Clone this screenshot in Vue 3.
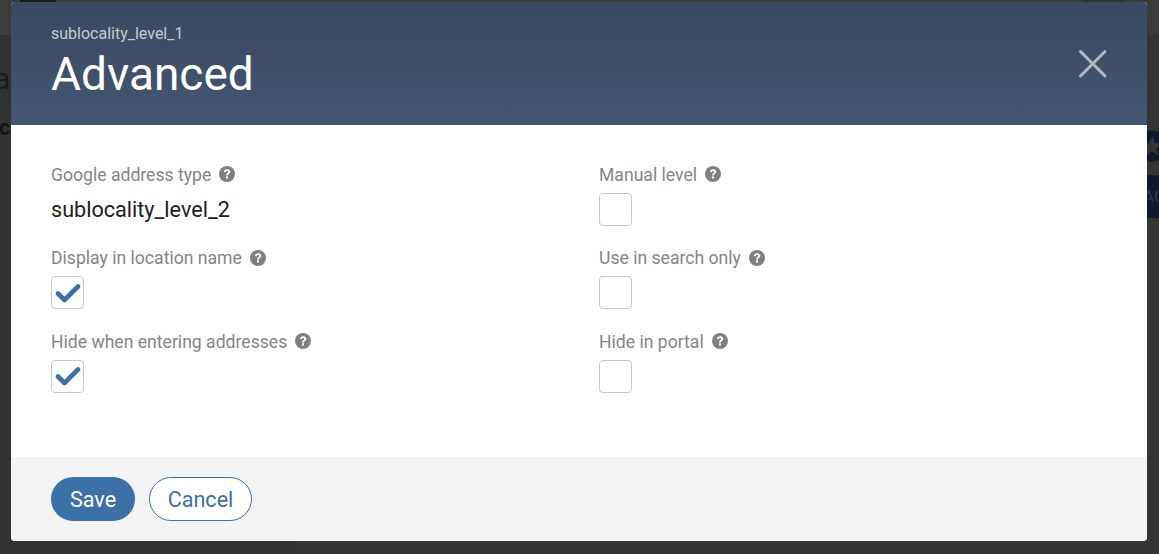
<script setup>
const fields = [
  { label: 'Google address type', value: 'sublocality_level_2' },
  { label: 'Manual level', checked: false },
  { label: 'Display in location name', checked: true },
  { label: 'Use in search only', checked: false },
  { label: 'Hide when entering addresses', checked: true },
  { label: 'Hide in portal', checked: false },
]
</script>

<template>
  <div class="page">
    <div class="behind">
      <div class="strip"></div>
      <div class="side"></div>
      <div class="top-icon"></div>
      <div class="top-btn"></div>
      <span class="peek peek-al">al</span>
      <span class="peek peek-c">c</span>
      <svg class="peek-star" width="30" height="32" viewBox="0 0 30 32">
        <circle cx="16" cy="16" r="15.5" fill="#0e1a2b" />
        <path d="M16 6 L19 13 L26 13.6 L20.6 18.4 L22.4 25.5 L16 21.6 L9.6 25.5 L11.4 18.4 L6 13.6 L13 13 Z" fill="#333" />
      </svg>
      <div class="peek-btn">AC</div>
    </div>
    <div class="modal">
      <header class="head">
        <div>
          <div class="sub">sublocality_level_1</div>
          <h1 class="title">Advanced</h1>
        </div>
        <svg class="close" width="30" height="30" viewBox="0 0 30 30">
          <path d="M2.5 2.5 L27 27 M27 2.5 L2.5 27" stroke="#b3b9c4" stroke-width="3" stroke-linecap="round" fill="none" />
        </svg>
      </header>
      <main class="body">
        <div v-for="f in fields" :key="f.label" class="field">
          <div class="label">
            <span>{{ f.label }}</span>
            <svg class="help" width="16" height="16" viewBox="0 0 16 16">
              <circle cx="8" cy="8" r="8" fill="#808080" />
              <path d="M4.9 6.1 C5 4.2 6.4 3.2 8.2 3.2 C10 3.2 11.3 4.2 11.3 5.8 C11.3 7 10.6 7.5 9.8 8 C9.2 8.4 9 8.7 9 9.5 L7.1 9.5 C7.1 8.3 7.5 7.7 8.2 7.2 C8.9 6.7 9.3 6.5 9.3 6 C9.3 5.4 8.8 5 8.1 5 C7.4 5 6.9 5.5 6.8 6.3 Z" fill="#fff" />
              <rect x="7" y="10.3" width="2" height="2.2" rx=".3" fill="#fff" />
            </svg>
          </div>
          <div v-if="f.value" class="value">{{ f.value }}</div>
          <div v-else class="box">
            <svg v-if="f.checked" width="26" height="22" viewBox="0 0 26 22">
              <path d="M3 11.5 L9.5 18 L23 4.5" stroke="#3b71a6" stroke-width="4.6" stroke-linecap="round" stroke-linejoin="round" fill="none" />
            </svg>
          </div>
        </div>
      </main>
      <footer class="foot">
        <button class="btn save">Save</button>
        <button class="btn cancel">Cancel</button>
      </footer>
    </div>
  </div>
</template>

<style>
html, body { margin: 0; background: #333; }
</style>

<style scoped>
.page {
  position: relative;
  width: 1159px;
  height: 554px;
  overflow: hidden;
  background: #343434;
  padding: 2px 12px 13px 11px;
  box-sizing: border-box;
  font-family: Roboto, sans-serif;
}
.behind { position: absolute; inset: 0; overflow: hidden; }
.strip { position: absolute; left: 0; right: 0; top: 0; height: 35px; background: #3b3b3a; }
.side { position: absolute; left: 0; top: 35px; bottom: 0; width: 295px; background: #323232; }
.top-icon { position: absolute; left: 20px; top: 0; width: 36px; height: 2px; background: #1c1c1c; }
.top-btn { position: absolute; left: 1083px; top: 0; width: 40px; height: 2px; background: #26382f; }
.peek { position: absolute; line-height: 24px; }
.peek-al { left: -6px; top: 64px; font-size: 30px; line-height: 30px; color: #1a1a1a; }
.peek-c { left: -1px; top: 116px; font-size: 22px; font-weight: 700; color: #141414; }
.peek-star { position: absolute; left: 1136px; top: 130px; }
.peek-btn {
  position: absolute;
  left: 1119px;
  top: 175px;
  width: 60px;
  height: 43px;
  background: #0e1a2b;
  color: #2e3844;
  font-size: 17px;
  line-height: 43px;
  padding-left: 24px;
  box-sizing: border-box;
  white-space: nowrap;
}
.modal {
  position: relative;
  height: 539px;
  border-radius: 4px;
  overflow: hidden;
  display: flex;
  flex-direction: column;
  background: #fff;
}
.head {
  height: 123px;
  flex: none;
  box-sizing: border-box;
  padding: 23px 39px 0 40px;
  display: flex;
  justify-content: space-between;
  align-items: flex-start;
  background: linear-gradient(#3a4962, #445672);
}
.sub { font-size: 16px; line-height: 18px; color: #c5cad2; }
.title { margin: 3px 0 0; font-size: 46px; line-height: 56px; font-weight: 400; color: #fff; }
.close { margin-top: 24px; }
.body {
  flex: 1;
  padding: 36.9px 40px 0;
  display: grid;
  grid-template-columns: 548px 1fr;
  grid-auto-rows: 83.5px;
  align-content: start;
}
.label {
  display: flex;
  align-items: center;
  gap: 8px;
  font-size: 17.6px;
  line-height: 25px;
  padding-top: 1px;
  color: #858585;
}
.help { margin-top: -2px; }
.value { margin-top: 9px; font-size: 21.6px; line-height: 26px; color: #212121; }
.box {
  width: 33px;
  height: 33px;
  margin-top: 5px;
  box-sizing: border-box;
  border: 1px solid #c8c8c8;
  border-radius: 4px;
  display: flex;
  align-items: center;
  justify-content: center;
}
.foot {
  height: 84px;
  flex: none;
  box-sizing: border-box;
  padding: 20px 40px;
  display: flex;
  gap: 14px;
  background: #f4f4f4;
}
.btn {
  height: 44px;
  border-radius: 22px;
  font-family: inherit;
  font-size: 21.6px;
  box-sizing: border-box;
  padding: 0;
}
.save { width: 84px; background: #3b71a6; border: 0; color: #fff; font-weight: 400; }
.cancel { width: 103px; background: #fff; border: 1px solid #3b71a6; color: #3b71a6; }
</style>
